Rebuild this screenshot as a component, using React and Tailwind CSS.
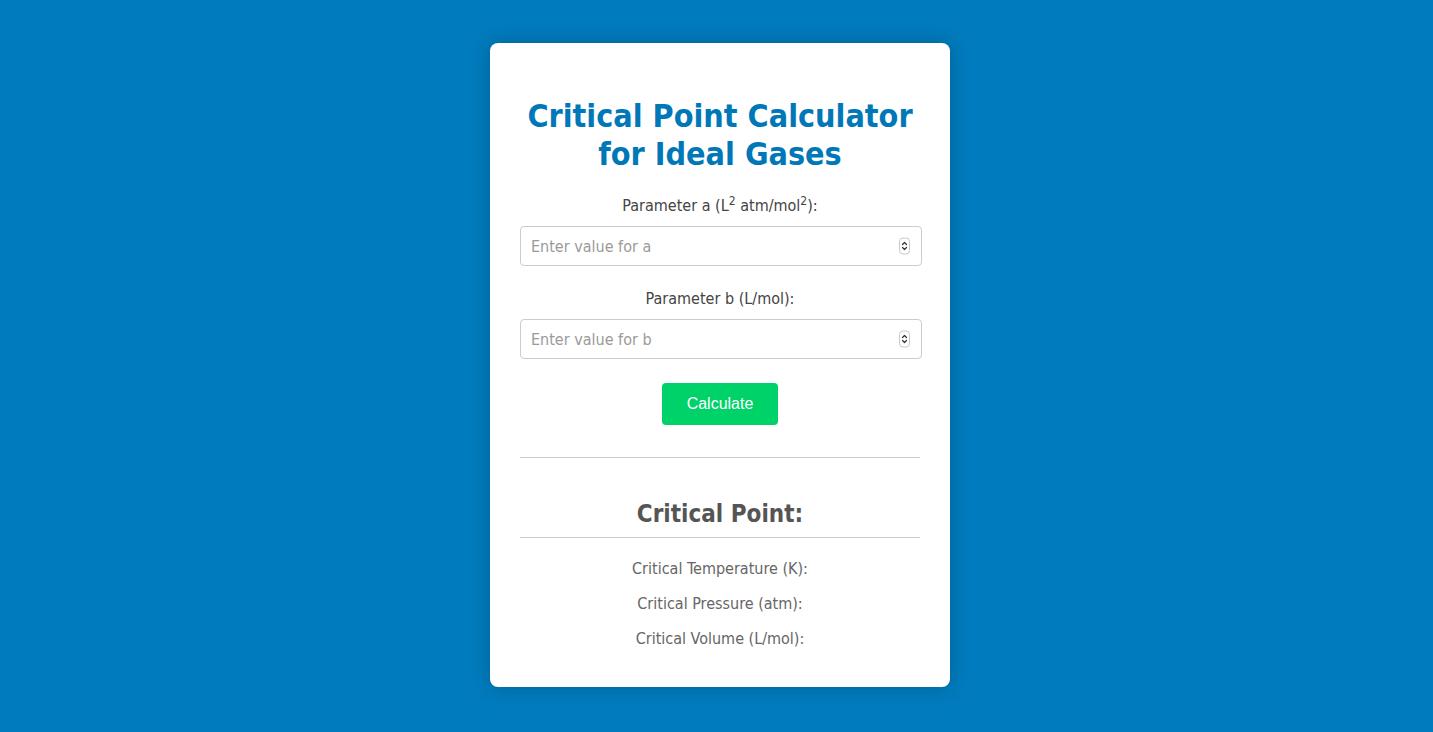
import React from "react";

const font = "font-['Tahoma','DejaVu_Sans_Condensed','DejaVu_Sans',sans-serif]";

const Spinner = () => (
  <span className="absolute right-[12px] top-1/2 -translate-y-1/2 flex h-[17px] w-[11px] items-center justify-center rounded-[4px] border border-[#c8c8c8] bg-white">
    <svg width="7" height="11" viewBox="0 0 7 11" fill="none" stroke="#333" strokeWidth="1.2" strokeLinecap="round" strokeLinejoin="round">
      <path d="M1.5 4 L3.5 2 L5.5 4" />
      <path d="M1.5 7 L3.5 9 L5.5 7" />
    </svg>
  </span>
);

const Field = ({ label, placeholder }) => (
  <div className="flex flex-col items-center">
    <label className="text-[16px] leading-[20px] text-[#444]">{label}</label>
    <div className="relative mt-[10px] w-[402px] self-start">
      <input
        type="text"
        placeholder={placeholder}
        className={`${font} h-[40px] w-full rounded-[4px] border border-[#cccccc] px-[10px] text-[16px] text-[#333] placeholder:text-[#9a9a9a] outline-none`}
      />
      <Spinner />
    </div>
  </div>
);

export default function App() {
  return (
    <div className={`${font} min-h-[732px] bg-[#007bbd] flex justify-center pt-[43px] pl-[7px]`}>
      <div className="w-[460px] h-[644px] rounded-[8px] bg-white px-[30px] shadow-[0_0_20px_rgba(0,0,0,0.2)] flex flex-col">
        <h1 className="mt-[54px] text-center text-[32px] font-bold leading-[38px] text-[#0078b8]">
          Critical Point Calculator for Ideal Gases
        </h1>
        <div className="mt-[23px] flex flex-col gap-[23px]">
          <Field
            label={<>Parameter a (L<sup className="text-[12px]">2</sup> atm/mol<sup className="text-[12px]">2</sup>):</>}
            placeholder="Enter value for a"
          />
          <Field label="Parameter b (L/mol):" placeholder="Enter value for b" />
        </div>
        <button className="mx-auto mt-[24px] h-[42px] w-[116px] rounded-[4px] bg-[#00d26a] font-['Liberation_Sans',Arial,sans-serif] text-[16px] text-white">
          Calculate
        </button>
        <hr className="mt-[32px] border-t border-[#cccccc]" />
        <h2 className="mt-[41px] text-center text-[24px] font-bold leading-[30px] text-[#555]">Critical Point:</h2>
        <hr className="mt-[8px] border-t border-[#cccccc]" />
        <div className="mt-[21px] flex flex-col items-center gap-[15px] text-[16px] leading-[20px] text-[#666]">
          <p>Critical Temperature (K):</p>
          <p>Critical Pressure (atm):</p>
          <p>Critical Volume (L/mol):</p>
        </div>
      </div>
    </div>
  );
}
